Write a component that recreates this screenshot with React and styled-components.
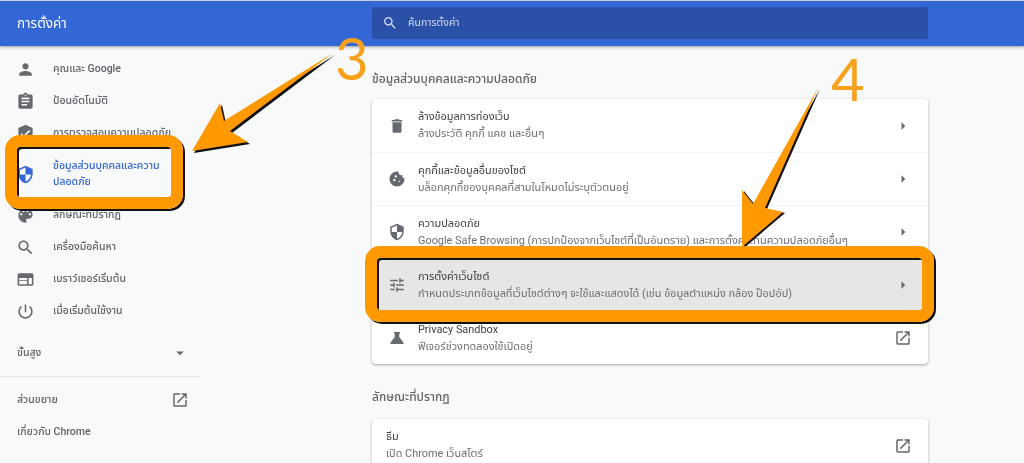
import React from "react";
import styled, { createGlobalStyle } from "styled-components";

const Global = createGlobalStyle`
  html, body { margin: 0; padding: 0; background: #f8f9fa; }
  * { box-sizing: border-box; }
`;

const paths = {
  person: "M12 12c2.21 0 4-1.79 4-4s-1.79-4-4-4-4 1.79-4 4 1.79 4 4 4zm0 2c-2.67 0-8 1.34-8 4v2h16v-2c0-2.66-5.33-4-8-4z",
  assignment: "M19 3h-4.18C14.4 1.84 13.3 1 12 1c-1.3 0-2.4.84-2.82 2H5c-1.1 0-2 .9-2 2v14c0 1.1.9 2 2 2h14c1.1 0 2-.9 2-2V5c0-1.1-.9-2-2-2zm-7 0c.55 0 1 .45 1 1s-.45 1-1 1-1-.45-1-1 .45-1 1-1zm2 14H7v-2h7v2zm3-4H7v-2h10v2zm0-4H7V7h10v2z",
  verified: "M12 1L3 5v6c0 5.55 3.84 10.74 9 12 5.16-1.26 9-6.45 9-12V5l-9-4zm-2 16l-4-4 1.41-1.41L10 14.17l6.59-6.59L18 9l-8 8z",
  security: "M12 1L3 5v6c0 5.55 3.84 10.74 9 12 5.16-1.26 9-6.45 9-12V5l-9-4zm0 10.99h7c-.53 4.12-3.28 7.79-7 8.94V12H5V6.3l7-3.11v8.8z",
  palette: "M12 3c-4.97 0-9 4.03-9 9s4.03 9 9 9c.83 0 1.5-.67 1.5-1.5 0-.39-.15-.74-.39-1.01-.23-.26-.38-.61-.38-.99 0-.83.67-1.5 1.5-1.5H16c2.76 0 5-2.24 5-5 0-4.42-4.03-8-9-8zm-5.5 9c-.83 0-1.5-.67-1.5-1.5S5.67 9 6.5 9 8 9.67 8 10.5 7.33 12 6.5 12zm3-4C8.67 8 8 7.33 8 6.5S8.67 5 9.5 5s1.5.67 1.5 1.5S10.33 8 9.5 8zm5 0c-.83 0-1.5-.67-1.5-1.5S13.67 5 14.5 5s1.5.67 1.5 1.5S15.33 8 14.5 8zm3 4c-.83 0-1.5-.67-1.5-1.5S16.67 9 17.5 9s1.5.67 1.5 1.5-.67 1.5-1.5 1.5z",
  search: "M15.5 14h-.79l-.28-.27C15.41 12.59 16 11.11 16 9.5 16 5.91 13.09 3 9.5 3S3 5.91 3 9.5 5.91 16 9.5 16c1.61 0 3.09-.59 4.23-1.57l.27.28v.79l5 4.99L20.49 19l-4.99-5zm-6 0C7.01 14 5 11.99 5 9.5S7.01 5 9.5 5 14 7.01 14 9.5 11.99 14 9.5 14z",
  web: "M20 4H4c-1.11 0-2 .9-2 2v12c0 1.1.89 2 2 2h16c1.1 0 2-.9 2-2V6c0-1.1-.89-2-2-2zm0 14h-4v-8h4v8zm-6 0H4v-4h10v4zm0-5H4v-3h10v3z",
  power: "M13 3h-2v10h2V3zm4.83 2.17l-1.42 1.42C17.99 7.86 19 9.81 19 12c0 3.87-3.13 7-7 7s-7-3.13-7-7c0-2.19 1.01-4.14 2.58-5.42L6.17 5.17C4.23 6.82 3 9.26 3 12c0 4.97 4.03 9 9 9s9-4.03 9-9c0-2.74-1.23-5.18-3.17-6.83z",
  del: "M6 19c0 1.1.9 2 2 2h8c1.1 0 2-.9 2-2V7H6v12zM19 4h-3.5l-1-1h-5l-1 1H5v2h14V4z",
  cookie: "M21.95 10.99c-1.79-.03-3.7-1.95-2.68-4.22-2.98 1-5.77-1.59-5.19-4.56C6.95.71 2 6.58 2 12c0 5.52 4.48 10 10 10 5.89 0 10.54-5.08 9.95-11.01zM8.5 15c-.83 0-1.5-.67-1.5-1.5S7.67 12 8.5 12s1.5.67 1.5 1.5S9.33 15 8.5 15zm2-5C9.67 10 9 9.33 9 8.5S9.67 7 10.5 7s1.5.67 1.5 1.5-.67 1.5-1.5 1.5zm4.5 6c-.55 0-1-.45-1-1s.45-1 1-1 1 .45 1 1-.45 1-1 1z",
  tune: "M3 17v2h6v-2H3zM3 5v2h10V5H3zm10 16v-2h8v-2h-8v-2h-2v6h2zM7 9v2H3v2h4v2h2V9H7zm14 4v-2H11v2h10zm-6-4h2V7h4V5h-4V3h-2v6z",
  flask: "M15.96 4H8.04c-.42 0-.65.48-.39.81L9 6.5v4.17L3.2 18.4c-.49.66-.02 1.6.8 1.6h16c.82 0 1.29-.94.8-1.6L15 10.67V6.5l1.35-1.69c.26-.33.03-.81-.39-.81z",
  open: "M19 19H5V5h7V3H5c-1.11 0-2 .9-2 2v14c0 1.1.89 2 2 2h14c1.1 0 2-.9 2-2v-7h-2v7zM14 3v2h3.59l-9.83 9.83 1.41 1.41L19 6.41V10h2V3h-7z",
  right: "M10 17l5-5-5-5v10z",
  down: "M7 10l5 5 5-5z",
};

const Svg = styled.svg`
  width: ${(p) => p.$size || 19}px;
  height: ${(p) => p.$size || 19}px;
  fill: ${(p) => p.$color || "#66696e"};
  flex: none;
  display: block;
`;

const Icon = ({ name, size, color }) => (
  <Svg viewBox="0 0 24 24" $size={size} $color={color}>
    <path d={paths[name]} />
  </Svg>
);

const Page = styled.div`
  position: relative;
  width: 1024px;
  height: 463px;
  overflow: hidden;
  background: #f8f9fa;
  font-family: Roboto, "Noto Sans", "Noto Sans Thai", sans-serif;
  color: #5f6368;
  border-top: 1px solid #c9ced8;
  filter: blur(0.4px);
`;

const Header = styled.header`
  position: relative;
  z-index: 1;
  height: 45px;
  background: #3367d6;
  display: grid;
  grid-template-columns: 372px 556px;
  align-items: center;
  box-shadow: 0 1px 3px rgba(60, 64, 67, 0.5);
`;

const HeaderTitle = styled.h1`
  margin: 0;
  padding: 1px 0 0 17px;
  font-size: 13.5px;
  font-weight: 400;
  color: #fff;
`;

const SearchBox = styled.div`
  height: 32px;
  margin-top: -1px;
  padding-left: 10px;
  background: #2a50a8;
  border-radius: 2px;
  display: flex;
  align-items: center;
  gap: 10px;
  color: #d5def2;
  font-size: 10.5px;
`;

const Body = styled.div`
  display: grid;
  grid-template-columns: 200px 1fr;
`;

const Sidebar = styled.nav`
  padding-top: 7px;
  display: flex;
  flex-direction: column;
`;

const NavItem = styled.div`
  height: ${(p) => (p.$tall ? 50 : 32)}px;
  padding-left: 16px;
  display: flex;
  align-items: center;
  gap: 18px;
  font-size: 10.5px;
  line-height: 16px;
  font-weight: 500;
  color: ${(p) => (p.$active ? "#3367d6" : "#5f6368")};
`;

const AdvancedRow = styled.div`
  height: 32px;
  margin-top: 10px;
  padding: 0 11px 0 17px;
  display: flex;
  align-items: center;
  justify-content: space-between;
  font-size: 10.5px;
  font-weight: 500;
`;

const Divider = styled.div`
  height: 1px;
  margin-top: 7px;
  background: #e3e5e8;
`;

const FooterRow = styled.div`
  height: 32px;
  margin-top: ${(p) => (p.$first ? 7 : 0)}px;
  padding: 0 11px 0 17px;
  display: flex;
  align-items: center;
  justify-content: space-between;
  font-size: 10.5px;
  font-weight: 500;
`;

const Main = styled.main`
  width: 556px;
  margin-left: 172px;
`;

const SectionTitle = styled.h2`
  margin: 0;
  height: ${(p) => (p.$later ? 55 : 53)}px;
  padding-top: ${(p) => (p.$later ? 25 : 25)}px;
  font-size: 12px;
  line-height: 16px;
  font-weight: 500;
  color: #5f6368;
`;

const Card = styled.section`
  background: #fff;
  border-radius: 4px;
  box-shadow: 0 1px 2px rgba(60, 64, 67, 0.3), 0 1px 3px 1px rgba(60, 64, 67, 0.1);
`;

const Row = styled.div`
  height: 53px;
  padding: 0 16px 0 ${(p) => (p.$plain ? 14 : 16)}px;
  display: flex;
  align-items: center;
  gap: 12px;
  background: ${(p) => (p.$hover ? "#e6e6e6" : "transparent")};
  & + & {
    border-top: 1px solid #f1f2f3;
  }
`;

const RowText = styled.div`
  flex: 1;
  min-width: 0;
  display: flex;
  flex-direction: column;
  gap: 1px;
  white-space: nowrap;
`;

const RowTitle = styled.div`
  font-size: 10.9px;
  line-height: 16px;
  font-weight: 400;
  color: #3c4043;
`;

const RowSub = styled.div`
  font-size: 10.9px;
  line-height: 16px;
  color: #6b6f74;
`;

const Annotations = styled.svg`
  position: absolute;
  left: 0;
  top: -1px;
  width: 1024px;
  height: 463px;
  z-index: 2;
  pointer-events: none;
`;

const Frame = styled.div`
  position: absolute;
  z-index: 3;
  left: ${(p) => p.$x}px;
  top: ${(p) => p.$y}px;
  width: ${(p) => p.$w}px;
  height: ${(p) => p.$h}px;
  border: 12px solid #ff9900;
  border-radius: 15px;
  box-shadow: 2px 2px 0 #111, inset 2px 2px 0 #111;
`;

const StepNumber = styled.span`
  position: absolute;
  z-index: 3;
  left: ${(p) => p.$x}px;
  top: ${(p) => p.$y}px;
  font-family: Lato, "Open Sans", sans-serif;
  font-size: 58px;
  line-height: 60px;
  font-weight: 400;
  color: #f9a11b;
`;

const nav = [
  ["person", "คุณและ Google"],
  ["assignment", "ป้อนอัตโนมัติ"],
  ["verified", "การตรวจสอบความปลอดภัย"],
];
const nav2 = [
  ["palette", "ลักษณะที่ปรากฏ"],
  ["search", "เครื่องมือค้นหา"],
  ["web", "เบราว์เซอร์เริ่มต้น"],
  ["power", "เมื่อเริ่มต้นใช้งาน"],
];
const rows = [
  ["del", "ล้างข้อมูลการท่องเว็บ", "ล้างประวัติ คุกกี้ แคช และอื่นๆ", "right"],
  ["cookie", "คุกกี้และข้อมูลอื่นของไซต์", "บล็อกคุกกี้ของบุคคลที่สามในโหมดไม่ระบุตัวตนอยู่", "right"],
  ["security", "ความปลอดภัย", "Google Safe Browsing (การปกป้องจากเว็บไซต์ที่เป็นอันตราย) และการตั้งค่าด้านความปลอดภัยอื่นๆ", "right"],
  ["tune", "การตั้งค่าเว็บไซต์", "กำหนดประเภทข้อมูลที่เว็บไซต์ต่างๆ จะใช้และแสดงได้ (เช่น ข้อมูลตำแหน่ง กล้อง ป๊อปอัป)", "right", true],
  ["flask", "Privacy Sandbox", "ฟีเจอร์ช่วงทดลองใช้เปิดอยู่", "open"],
];

export default function App() {
  return (
    <Page>
      <Global />
      <Header>
        <HeaderTitle>การตั้งค่า</HeaderTitle>
        <SearchBox>
          <Icon name="search" size={16} color="#d5def2" />
          ค้นการตั้งค่า
        </SearchBox>
      </Header>
      <Body>
        <Sidebar>
          {nav.map(([icon, label]) => (
            <NavItem key={label}>
              <Icon name={icon} />
              {label}
            </NavItem>
          ))}
          <NavItem $tall $active>
            <Icon name="security" color="#3367d6" />
            <span>ข้อมูลส่วนบุคคลและความ<br />ปลอดภัย</span>
          </NavItem>
          {nav2.map(([icon, label]) => (
            <NavItem key={label}>
              <Icon name={icon} />
              {label}
            </NavItem>
          ))}
          <AdvancedRow>
            ขั้นสูง
            <Icon name="down" size={18} />
          </AdvancedRow>
          <Divider />
          <FooterRow $first>
            ส่วนขยาย
            <Icon name="open" size={18} />
          </FooterRow>
          <FooterRow>เกี่ยวกับ Chrome</FooterRow>
        </Sidebar>
        <Main>
          <SectionTitle>ข้อมูลส่วนบุคคลและความปลอดภัย</SectionTitle>
          <Card>
            {rows.map(([icon, title, sub, end, hover]) => (
              <Row key={title} $hover={hover}>
                <Icon name={icon} size={18} />
                <RowText>
                  <RowTitle>{title}</RowTitle>
                  <RowSub>{sub}</RowSub>
                </RowText>
                <Icon name={end} size={18} />
              </Row>
            ))}
          </Card>
          <SectionTitle $later>ลักษณะที่ปรากฏ</SectionTitle>
          <Card>
            <Row $plain>
              <RowText>
                <RowTitle>ธีม</RowTitle>
                <RowSub>เปิด Chrome เว็บสโตร์</RowSub>
              </RowText>
              <Icon name="open" size={18} />
            </Row>
          </Card>
        </Main>
      </Body>
      <Annotations viewBox="0 0 1024 463">
        <polygon points="194,153 222,105 226,123 335,55 232,133 250,144" fill="#111" />
        <polygon points="192,151 220,103 224,121 333,53 230,131 248,142" fill="#ff9900" />
        <polygon points="744,248 744,191 755,205 820,89 767,209 785,213" fill="#111" />
        <polygon points="742,247 742,190 753,204 818,88 765,208 783,212" fill="#ff9900" />
      </Annotations>
      <Frame $x={5} $y={134} $w={178} $h={74} />
      <Frame $x={365} $y={245} $w={569} $h={76} />
      <StepNumber $x={335} $y={27}>3</StepNumber>
      <StepNumber $x={831} $y={48}>4</StepNumber>
    </Page>
  );
}
